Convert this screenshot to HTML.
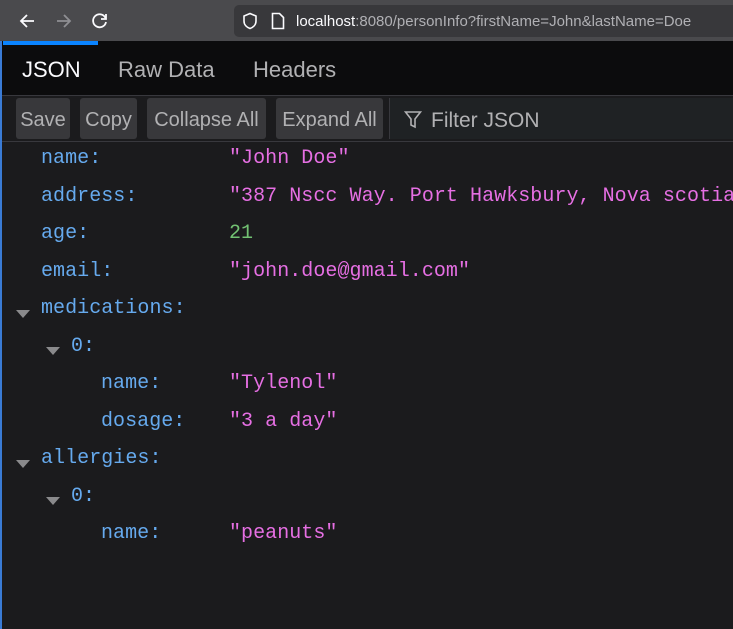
<!DOCTYPE html>
<html><head><style>
*{margin:0;padding:0;box-sizing:border-box}
body{width:733px;height:629px;overflow:hidden;background:#1b1b1d;font-family:"Liberation Sans",sans-serif;position:relative}
.top{position:absolute;left:0;top:0;width:733px;height:41px;background:#4a4a4d}
.url{position:absolute;left:234px;top:5px;width:499px;height:32px;background:#38383b;border-radius:5px 0 0 5px;color:#fbfbfe;font-size:15px;line-height:33px;padding-left:62px}
.url span{color:#b0b0b4}
.tabs{position:absolute;left:0;top:41px;width:733px;height:55px;background:#0c0c0d;border-bottom:1px solid #38383d}
.bar{position:absolute;left:3px;top:41px;width:95px;height:4px;background:#0a84ff}
.tab{position:absolute;top:57px;font-size:22px;color:#b1b1b3}
.btns{position:absolute;left:0;top:96px;width:733px;height:46px;background:#1b1b1d;border-bottom:1px solid #38383d}
.b{position:absolute;top:2px;height:41px;background:#38383b;border-radius:3px;color:#b1b1b3;font-size:20px;line-height:45px;text-align:center}
.filter{position:absolute;left:389px;top:2px;width:344px;height:41px;background:#1f2224;border-left:1px solid #38383d;color:#b1b1b3;font-size:21px;line-height:45px;padding-left:41px}
.row{position:absolute;font-family:"Liberation Mono",monospace;font-size:20px;letter-spacing:0.05px;white-space:pre;line-height:22px}
.k{color:#66aaee}.s{color:#e66fe3}.n{color:#72c172}
.tri{position:absolute;width:0;height:0;border-left:7px solid transparent;border-right:7px solid transparent;border-top:8px solid #8a8a8c}
.lb{position:absolute;left:0;top:41px;width:2px;height:588px;background:#3a7bd5}
</style></head><body>
<div class="top">
<svg style="position:absolute;left:18px;top:12px" width="18" height="18" viewBox="0 0 18 18"><path d="M16 9H3M9 3L3 9l6 6" stroke="#fbfbfe" stroke-width="1.8" fill="none"/></svg>
<svg style="position:absolute;left:55px;top:12px" width="18" height="18" viewBox="0 0 18 18"><path d="M2 9h13M9 3l6 6-6 6" stroke="#8f8f93" stroke-width="1.8" fill="none"/></svg>
<svg style="position:absolute;left:91px;top:12px" width="18" height="18" viewBox="0 0 18 18"><path d="M14.5 6A6.5 6.5 0 1 0 15 10" stroke="#fbfbfe" stroke-width="1.8" fill="none"/><path d="M15 2v5h-5" stroke="#fbfbfe" stroke-width="1.8" fill="none"/></svg>
<div class="url"><span style="color:#fbfbfe">localhost</span><span>:8080/personInfo?firstName=John&amp;lastName=Doe</span></div>
<svg style="position:absolute;left:242px;top:12px" width="16" height="18" viewBox="0 0 16 18"><path d="M8 1.5L2 4v5c0 4 3 6.5 6 7.5 3-1 6-3.5 6-7.5V4z" stroke="#fbfbfe" stroke-width="1.6" fill="none"/></svg>
<svg style="position:absolute;left:271px;top:12px" width="14" height="18" viewBox="0 0 14 18"><path d="M1.5 1.5h7l4 4v11h-11z" stroke="#fbfbfe" stroke-width="1.6" fill="none"/></svg>
</div>
<div class="tabs"></div>
<div class="bar"></div>
<div class="tab" style="left:22px;color:#fbfbfe">JSON</div>
<div class="tab" style="left:118px">Raw Data</div>
<div class="tab" style="left:253px">Headers</div>
<div class="btns">
<div class="b" style="left:16px;width:54px">Save</div>
<div class="b" style="left:80px;width:57px">Copy</div>
<div class="b" style="left:147px;width:119px">Collapse All</div>
<div class="b" style="left:276px;width:107px">Expand All</div>
<div class="filter">Filter JSON</div>
<svg style="position:absolute;left:404px;top:14px" width="18" height="20" viewBox="0 0 18 20"><path d="M1.5 2h15l-5.5 7v8l-4-2V9z" stroke="#b1b1b3" stroke-width="1.6" fill="none"/></svg>
</div>
<div class="lb"></div>
<div class="row k" style="left:41px;top:148px">name:</div><div class="row s" style="left:229px;top:148px">"John Doe"</div>
<div class="row k" style="left:41px;top:186px">address:</div><div class="row s" style="left:229px;top:186px">"387 Nscc Way. Port Hawksbury, Nova scotia"</div>
<div class="row k" style="left:41px;top:223px">age:</div><div class="row n" style="left:229px;top:223px">21</div>
<div class="row k" style="left:41px;top:261px">email:</div><div class="row s" style="left:229px;top:261px">"john.doe@gmail.com"</div>
<div class="tri" style="left:16px;top:310px"></div><div class="row k" style="left:41px;top:298px">medications:</div>
<div class="tri" style="left:46px;top:347px"></div><div class="row k" style="left:71px;top:336px">0:</div>
<div class="row k" style="left:101px;top:373px">name:</div><div class="row s" style="left:229px;top:373px">"Tylenol"</div>
<div class="row k" style="left:101px;top:411px">dosage:</div><div class="row s" style="left:229px;top:411px">"3 a day"</div>
<div class="tri" style="left:16px;top:460px"></div><div class="row k" style="left:41px;top:448px">allergies:</div>
<div class="tri" style="left:46px;top:497px"></div><div class="row k" style="left:71px;top:486px">0:</div>
<div class="row k" style="left:101px;top:523px">name:</div><div class="row s" style="left:229px;top:523px">"peanuts"</div>
</body></html>
